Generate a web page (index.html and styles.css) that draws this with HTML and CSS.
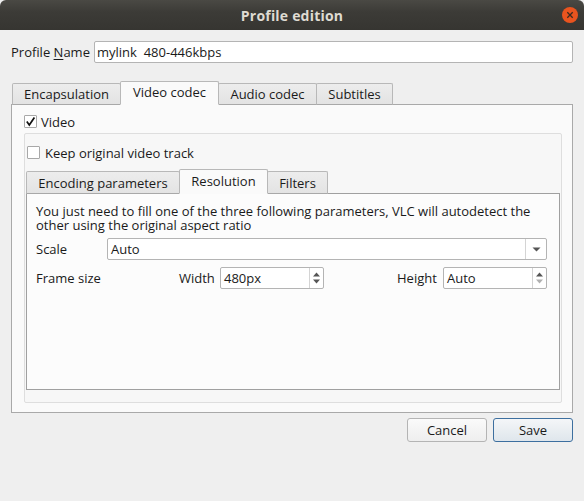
FILE: index.html
```html
<!DOCTYPE html>
<html>
<head>
<meta charset="utf-8">
<link rel="stylesheet" href="styles.css">
</head>
<body>
<div class="window">
  <div class="titlebar">
    <span class="title">Profile edition</span>
    <span class="close"><svg width="16" height="16" viewBox="0 0 16 16"><circle cx="8" cy="8" r="8" fill="#e9541f"/><path d="M5.3 5.3 L10.7 10.7 M10.7 5.3 L5.3 10.7" stroke="#3a2a20" stroke-width="1.3"/></svg></span>
  </div>
  <div class="content">
    <div class="name-row">
      <label class="name-label">Profile <u>N</u>ame</label>
      <div class="lineedit">mylink&nbsp; 480-446kbps</div>
    </div>

    <div class="tabwidget outer">
      <div class="tabbar">
        <div class="tab">Encapsulation</div>
        <div class="tab selected">Video codec</div>
        <div class="tab">Audio codec</div>
        <div class="tab">Subtitles</div>
      </div>
      <div class="pane outer-pane">
        <div class="check-row video-row">
          <span class="checkbox checked"><svg width="11" height="11" viewBox="0 0 11 11"><path d="M1.8 5.6 L4.3 9 L9.4 1.6" fill="none" stroke="#111" stroke-width="1.7"/></svg></span>
          <span>Video</span>
        </div>
        <div class="groupbox">
          <div class="check-row keep-row">
            <span class="checkbox"></span>
            <span>Keep original video track</span>
          </div>
          <div class="tabwidget inner">
            <div class="tabbar">
              <div class="tab">Encoding parameters</div>
              <div class="tab selected">Resolution</div>
              <div class="tab">Filters</div>
            </div>
            <div class="pane inner-pane">
              <p class="hint">You just need to fill one of the three following parameters, VLC will autodetect the other using the original aspect ratio</p>
              <div class="form-row scale-row">
                <span class="lbl scale-lbl">Scale</span>
                <div class="combo"><span class="val">Auto</span><span class="combo-btn"><svg width="9" height="5" viewBox="0 0 9 5"><path d="M0.5 0.5 L8.5 0.5 L4.5 4.5 Z" fill="#555"/></svg></span></div>
              </div>
              <div class="form-row size-row">
                <span class="lbl frame-lbl">Frame size</span>
                <span class="lbl width-lbl">Width</span>
                <div class="spin width-spin"><span class="val">480px</span><span class="spin-btn"><svg width="9" height="14" viewBox="0 0 9 14"><path d="M1 5.5 L8 5.5 L4.5 1.5 Z" fill="#555"/><path d="M1 8.5 L8 8.5 L4.5 12.5 Z" fill="#555"/></svg></span></div>
                <span class="lbl height-lbl">Height</span>
                <div class="spin height-spin"><span class="val">Auto</span><span class="spin-btn"><svg width="9" height="14" viewBox="0 0 9 14"><path d="M1 5.5 L8 5.5 L4.5 1.5 Z" fill="#555"/><path d="M1 8.5 L8 8.5 L4.5 12.5 Z" fill="#b0b0b0"/></svg></span></div>
              </div>
            </div>
          </div>
        </div>
      </div>
    </div>

    <div class="buttons">
      <button class="btn">Cancel</button>
      <button class="btn default">Save</button>
    </div>
  </div>
</div>
</body>
</html>
```
FILE: styles.css
```css
html, body {
  margin: 0;
  padding: 0;
}
body {
  width: 584px;
  height: 501px;
  background: #efefef;
  font-family: "Open Sans", "DejaVu Sans", sans-serif;
  font-size: 13px;
  color: #1a1a1a;
  overflow: hidden;
}
.window {
  width: 584px;
  height: 501px;
}
.titlebar {
  height: 30px;
  background: linear-gradient(#4a4944, #3c3b37 40%, #363531);
  display: flex;
  align-items: center;
  justify-content: center;
  position: relative;
  border-radius: 6px 6px 0 0;
}
.title {
  color: #dfdbd2;
  font-family: "Open Sans", "DejaVu Sans", sans-serif;
  font-weight: 700;
  font-size: 14px;
  letter-spacing: 0.2px;
}
.close {
  position: absolute;
  right: 6px;
  top: 7px;
  width: 16px;
  height: 16px;
  display: block;
}
.close svg { display: block; }
.content {
  padding: 11px 11px 0 11px;
}
.name-row {
  display: flex;
  align-items: center;
  height: 22px;
}
.name-label {
  width: 83px;
  white-space: nowrap;
}
.name-label u {
  text-decoration-thickness: 1px;
  text-underline-offset: 2px;
}
.lineedit {
  flex: 1;
  height: 20px;
  border: 1px solid #b4b4b4;
  border-radius: 2px;
  background: #ffffff;
  display: flex;
  align-items: center;
  padding-left: 2px;
  white-space: nowrap;
}
.tabwidget.outer {
  margin-top: 18px;
}
.tabbar {
  display: flex;
  align-items: flex-end;
  padding-left: 1px;
  position: relative;
  z-index: 1;
  margin-bottom: -1px;
}
.tab {
  height: 21px;
  border: 1px solid #b8b8b8;
  border-bottom: 1px solid #a8a8a8;
  border-radius: 2px 2px 0 0;
  background: linear-gradient(#ededed, #e3e3e3);
  display: flex;
  align-items: center;
  justify-content: center;
  box-sizing: border-box;
  margin-right: -1px;
  white-space: nowrap;
  flex: none;
}
.tab.selected {
  height: 24px;
  background: #fafafa;
  border-bottom-color: #fafafa;
  position: relative;
  z-index: 2;
  padding-bottom: 2px;
}
.outer .tab { height: 22px; }
.outer .tab.selected { height: 24px; }
.outer .tab:nth-child(1) { width: 109px; }
.outer .tab:nth-child(2) { width: 99px; }
.outer .tab:nth-child(3) { width: 99px; }
.outer .tab:nth-child(4) { width: 77px; }
.pane {
  border: 1px solid #a9a9a9;
  background: #fafafa;
  box-sizing: border-box;
}
.outer-pane {
  height: 309px;
  padding: 9px 10px 9px 12px;
  display: flex;
  flex-direction: column;
}
.check-row {
  display: flex;
  align-items: center;
  height: 15px;
}
.checkbox {
  width: 13px;
  height: 13px;
  box-sizing: border-box;
  border: 1px solid #a8a8a8;
  background: #ffffff;
  border-radius: 1px;
  margin-right: 4px;
  display: flex;
  align-items: center;
  justify-content: center;
  flex: none;
}
.checkbox svg { display: block; }
.groupbox {
  margin-top: 4px;
  flex: 1;
  border: 1px solid #dedede;
  border-radius: 2px;
  background: #f7f7f7;
  padding: 11px 1px 12px 1px;
  display: flex;
  flex-direction: column;
}
.keep-row {
  margin-left: 1px;
}
.keep-row .checkbox {
  margin-right: 5px;
}
.tabwidget.inner {
  margin-top: 9px;
  flex: 1;
  display: flex;
  flex-direction: column;
}
.inner .tabbar { padding-left: 0; }
.inner .tab { height: 23px; }
.inner .tab.selected { height: 25px; }
.inner .tab:nth-child(1) { width: 154px; }
.inner .tab:nth-child(2) { width: 89px; }
.inner .tab:nth-child(3) { width: 61px; }
.inner-pane {
  flex: 1;
  background: #fcfcfc;
  border-color: #a0a0a0;
  padding: 10px 12px 0 9px;
}
.hint {
  margin: 0;
  line-height: 14px;
}
.form-row {
  display: flex;
  align-items: center;
  height: 22px;
}
.scale-row {
  margin-top: 6px;
}
.size-row {
  margin-top: 7px;
}
.lbl { white-space: nowrap; }
.scale-lbl { width: 72px; }
.frame-lbl { width: 143px; }
.width-lbl { width: 41px; }
.height-lbl { margin-left: 73px; width: 46px; }
.combo, .spin {
  height: 22px;
  box-sizing: border-box;
  border: 1px solid #b4b4b4;
  border-radius: 2px;
  background: #ffffff;
  display: flex;
  align-items: center;
  flex: none;
}
.combo { width: 440px; }
.val {
  flex: 1;
  padding-left: 3px;
}
.combo-btn {
  width: 20px;
  height: 20px;
  border-left: 1px solid #d4d4d4;
  display: flex;
  align-items: center;
  justify-content: center;
}
.combo-btn svg, .spin-btn svg { display: block; }
.spin { width: 104px; }
.spin-btn {
  width: 13px;
  height: 20px;
  border-left: 1px solid #d4d4d4;
  display: flex;
  align-items: center;
  justify-content: center;
}
.buttons {
  display: flex;
  justify-content: flex-end;
  gap: 6px;
  margin-top: 5px;
}
.btn {
  width: 80px;
  height: 24px;
  border: 1px solid #b4b4b4;
  border-radius: 3px;
  background: linear-gradient(#fafafa, #eeeeee);
  font-family: "Open Sans", "DejaVu Sans", sans-serif;
  font-size: 13px;
  color: #1a1a1a;
  padding: 0;
}
.btn.default {
  border-color: #3d6f9f;
  background: linear-gradient(#f4f6f8, #dfe6ec);
}
```
